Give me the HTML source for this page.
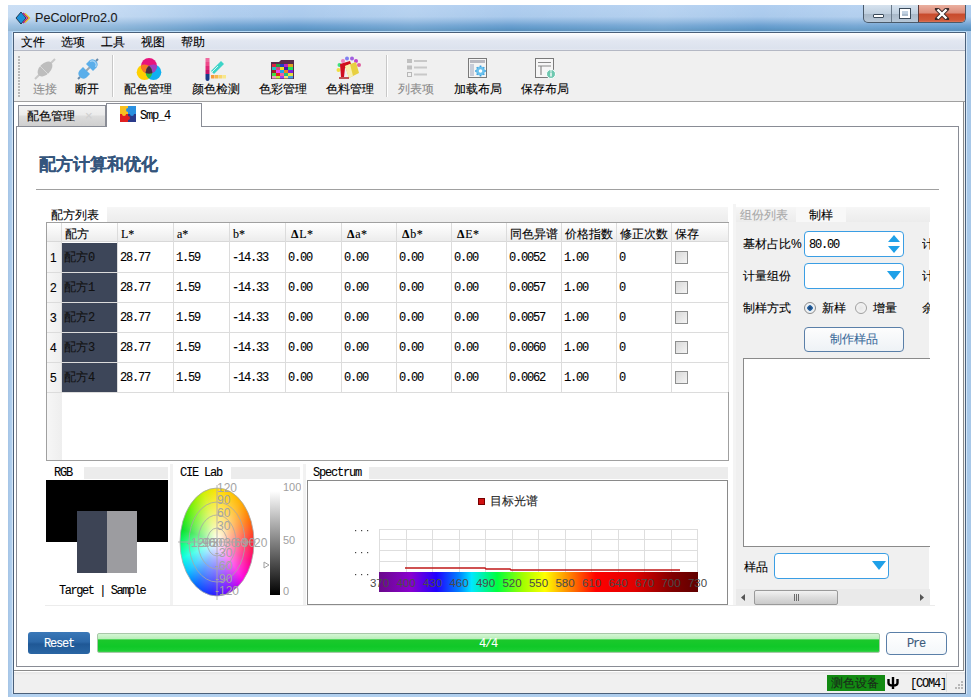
<!DOCTYPE html>
<html><head><meta charset="utf-8">
<style>
*{margin:0;padding:0;box-sizing:border-box}
html,body{width:974px;height:700px;overflow:hidden;background:#fff;font-family:"Liberation Sans",sans-serif;font-size:12px;color:#000}
.a{position:absolute}
.m{font-family:"Liberation Mono",monospace;letter-spacing:-1.2px}
.t{white-space:nowrap;line-height:1;-webkit-text-stroke:0.1px currentColor}
</style></head><body>
<!-- window frame -->
<div class="a" id="frame" style="left:8px;top:5px;width:963px;height:692px;background:linear-gradient(90deg,#a4c4e6 0,#b4d2f0 4px,#b0cfee 50%,#a8c8e8 100%)"></div>
<div class="a" style="left:8px;top:5px;width:963px;height:26px;background:linear-gradient(180deg,#b0cef0 0,#aacaec 45%,#90b8e0 60%,#6ea2d2 78%,#5e98c8 90%,#5a8cb8 100%)"></div><div class="a" style="left:13px;top:31px;width:953px;height:1px;background:#b8dcf8"></div>
<div class="a" style="left:8px;top:5px;width:963px;height:26px;background:linear-gradient(90deg,rgba(255,255,255,.35) 0,rgba(255,255,255,.3) 10%,rgba(255,255,255,.05) 22%,rgba(255,255,255,0) 30%,rgba(255,255,255,.12) 42%,rgba(255,255,255,0) 52%,rgba(255,255,255,.12) 68%,rgba(255,255,255,0) 78%,rgba(255,255,255,.1) 88%,rgba(255,255,255,0) 100%)"></div>
<div class="a" style="left:12px;top:32px;width:1px;height:662px;background:#d4e6f8"></div>
<div class="a" style="left:966px;top:32px;width:1px;height:662px;background:#d4e6f8"></div>
<!-- title -->
<div class="a" style="left:15px;top:12px;width:16px;height:12px">
<svg width="16" height="12" viewBox="0 0 16 12"><path d="M6 0 L11 6 L6 12 L1 6Z" fill="#1a8fd8" stroke="#123" stroke-width=".8"/><path d="M8 1 L13 6 L8 11" fill="none" stroke="#b0207a" stroke-width="1.6"/><path d="M10 1.5 L14.5 6 L10 10.5" fill="none" stroke="#e8c020" stroke-width="1.3"/></svg></div>
<div class="a t" style="left:35px;top:12px;font-size:12.6px;color:#1a1a1a">PeColorPro2.0</div>
<!-- caption buttons -->
<div class="a" style="left:863px;top:5px;width:103px;height:18px;border:1px solid #4a5a6a;border-top:none;border-radius:0 0 5px 5px;overflow:hidden;background:linear-gradient(#d6e2ee,#c0d0e0 50%,#a8b8c8 51%,#b8c8d8)">
 <div class="a" style="left:27px;top:0;width:1px;height:18px;background:#6a7a8a"></div>
 <div class="a" style="left:54px;top:0;width:48px;height:18px;border-left:1px solid #5a3a3a;background:linear-gradient(#eab0a0,#dc8a78 45%,#c84a2c 50%,#d05a3a 85%,#e08870)"></div>
 <div class="a" style="left:9px;top:9px;width:11px;height:4px;background:#fff;border:1px solid #3a4a5a;border-radius:1px"></div>
 <div class="a" style="left:36px;top:4px;width:10px;height:9px;background:transparent;border:2px solid #fff;outline:1px solid #3a4a5a"></div>
 <svg class="a" style="left:70px;top:3px" width="16" height="12" viewBox="0 0 16 12"><path d="M3 1 L13 11 M13 1 L3 11" stroke="#3a2a2a" stroke-width="4.2" stroke-linecap="round"/><path d="M3.5 1.5 L12.5 10.5 M12.5 1.5 L3.5 10.5" stroke="#fff" stroke-width="2.4"/></svg>
</div>
<!-- client -->
<div class="a" style="left:13px;top:32px;width:953px;height:662px;border:1px solid #4a607a;background:#f0f0f0"></div>
<!-- menubar -->
<div class="a" style="left:14px;top:33px;width:951px;height:18px;background:linear-gradient(#ffffff 0,#f2f4f9 20%,#e2e7f1 45%,#dce2ee 90%,#e4e8f0);border-bottom:1px solid #b4b8c4"></div>
<div class="a t" style="left:21px;top:36px">文件</div>
<div class="a t" style="left:61px;top:36px">选项</div>
<div class="a t" style="left:101px;top:36px">工具</div>
<div class="a t" style="left:141px;top:36px">视图</div>
<div class="a t" style="left:181px;top:36px">帮助</div>
<!-- toolbar -->
<div class="a" style="left:14px;top:51px;width:951px;height:51px;background:#f0f0f0;border-bottom:1px solid #a0a0a0"></div>

<!-- gripper -->
<div class="a" style="left:18px;top:56px;width:2px;height:42px;background:repeating-linear-gradient(#b8b8b8 0,#b8b8b8 2px,transparent 2px,transparent 3px)"></div>
<!-- connect (disabled) -->
<svg class="a" style="left:33px;top:57px" width="24" height="24" viewBox="0 0 24 24">
 <path d="M2 22 L7 17" stroke="#c8c8c8" stroke-width="2"/>
 <path d="M22 2 L17 7" stroke="#c8c8c8" stroke-width="2"/>
 <ellipse cx="12" cy="12" rx="5.5" ry="9" transform="rotate(45 12 12)" fill="#bdbdbd"/>
 <path d="M7 9 L15 17" stroke="#d8d8d8" stroke-width="1"/>
</svg>
<div class="a t" style="left:33px;top:83px;color:#8c8c8c">连接</div>
<!-- disconnect -->
<svg class="a" style="left:76px;top:57px" width="24" height="24" viewBox="0 0 24 24">
 <path d="M9 15 L15 9" stroke="#9aa8b4" stroke-width="2"/>
 <path d="M13.5 3.5 A5 5 0 0 1 20.5 10.5 L17 14 L10 7Z" fill="#5aaeea"/>
 <path d="M20 4 L22 2" stroke="#6a8aa8" stroke-width="2"/>
 <path d="M10.5 20.5 A5 5 0 0 1 3.5 13.5 L7 10 L14 17Z" fill="#5aaeea"/>
 <path d="M4 20 L2 22" stroke="#6a8aa8" stroke-width="2"/>
 <path d="M14 4.5 A4 4 0 0 1 19.5 10" stroke="#a8d4f4" stroke-width="1.2" fill="none"/>
</svg>
<div class="a t" style="left:75px;top:83px">断开</div>
<!-- separator -->
<div class="a" style="left:112px;top:55px;width:1px;height:42px;background:#c8c8c8;box-shadow:1px 0 0 #fff"></div>
<!-- color match -->
<svg class="a" style="left:134px;top:55px" width="30" height="28" viewBox="0 0 30 28">
 <defs><clipPath id="cm"><circle cx="15" cy="10.8" r="7.9"/></clipPath><clipPath id="cy"><circle cx="10.5" cy="17.3" r="7.8"/></clipPath><clipPath id="cc"><circle cx="19.5" cy="17.3" r="7.8"/></clipPath></defs>
 <circle cx="10.5" cy="17.3" r="7.8" fill="#ffd000"/>
 <circle cx="19.5" cy="17.3" r="7.8" fill="#10b0f0"/>
 <circle cx="15" cy="10.8" r="7.9" fill="#e8147c"/>
 <g clip-path="url(#cm)"><circle cx="10.5" cy="17.3" r="7.8" fill="#f57a20"/><circle cx="19.5" cy="17.3" r="7.8" fill="#a040c0"/></g>
 <g clip-path="url(#cy)"><circle cx="19.5" cy="17.3" r="7.8" fill="#30c040"/></g>
 <g clip-path="url(#cm)"><g clip-path="url(#cy)"><circle cx="19.5" cy="17.3" r="7.8" fill="#4a2a40"/></g></g>
</svg>
<div class="a t" style="left:124px;top:83px">配色管理</div>
<!-- color detect -->
<svg class="a" style="left:203px;top:57px" width="24" height="24" viewBox="0 0 24 24">
 <rect x="2.5" y="1" width="4" height="4" fill="#f06aa0"/>
 <rect x="2.5" y="5" width="4" height="4" fill="#ee4a8a"/>
 <rect x="2.5" y="9" width="4" height="4" fill="#e02878"/>
 <rect x="2.5" y="13" width="4" height="4" fill="#c8146a"/>
 <path d="M2.5 17 H6.5 V22 A2 2 0 0 1 2.5 22Z" fill="#1a3a8a"/>
 <path d="M8 14 L18 4 L21 7 L11 17Z" fill="#3cd4c8"/>
 <path d="M9 15 L12 12 M12 12 L15 9" stroke="#fff" stroke-width=".8"/>
 <rect x="8" y="18" width="3.5" height="3.5" fill="#f49a3a"/>
 <rect x="12" y="18" width="3.5" height="3.5" fill="#f6b84a"/>
 <rect x="16" y="18" width="3.5" height="3.5" fill="#f8d66a"/>
 <rect x="20" y="18" width="3" height="3.5" fill="#f8e88a"/>
</svg>
<div class="a t" style="left:192px;top:83px">颜色检测</div>
<!-- color management: folder mosaic -->
<svg class="a" style="left:270px;top:59px" width="26" height="21" viewBox="0 0 26 21">
 <path d="M1 3 H9 L11 1 H24 V20 H1Z" fill="#5a2a4a"/>
 <g>
 <rect x="2" y="5" width="4" height="3" fill="#e02040"/><rect x="6" y="5" width="4" height="3" fill="#20a040"/><rect x="10" y="5" width="4" height="3" fill="#2040c0"/><rect x="14" y="5" width="4" height="3" fill="#c020c0"/><rect x="18" y="5" width="5" height="3" fill="#e0a020"/>
 <rect x="2" y="8" width="4" height="3" fill="#20c0c0"/><rect x="6" y="8" width="4" height="3" fill="#e04080"/><rect x="10" y="8" width="4" height="3" fill="#f0e020"/><rect x="14" y="8" width="4" height="3" fill="#4020a0"/><rect x="18" y="8" width="5" height="3" fill="#20e060"/>
 <rect x="2" y="11" width="4" height="3" fill="#a02020"/><rect x="6" y="11" width="4" height="3" fill="#f040f0"/><rect x="10" y="11" width="4" height="3" fill="#20a0f0"/><rect x="14" y="11" width="4" height="3" fill="#f08020"/><rect x="18" y="11" width="5" height="3" fill="#8020e0"/>
 <rect x="2" y="14" width="4" height="3" fill="#40e040"/><rect x="6" y="14" width="4" height="3" fill="#e02020"/><rect x="10" y="14" width="4" height="3" fill="#f060a0"/><rect x="14" y="14" width="4" height="3" fill="#20c080"/><rect x="18" y="14" width="5" height="3" fill="#e0e040"/>
 <rect x="2" y="17" width="4" height="2.5" fill="#f0a0c0"/><rect x="6" y="17" width="4" height="2.5" fill="#c0f040"/><rect x="10" y="17" width="4" height="2.5" fill="#a040f0"/><rect x="14" y="17" width="4" height="2.5" fill="#f0e080"/><rect x="18" y="17" width="5" height="2.5" fill="#40a0e0"/>
 </g>
</svg>
<div class="a t" style="left:259px;top:83px">色彩管理</div>
<!-- colorant management -->
<svg class="a" style="left:336px;top:56px" width="26" height="25" viewBox="0 0 26 25">
 <circle cx="7" cy="5" r="2" fill="#f080c0"/><circle cx="11" cy="2.5" r="2" fill="#8080f0"/><circle cx="16" cy="2.5" r="2" fill="#a060e0"/><circle cx="20" cy="5" r="2" fill="#c040d0"/><circle cx="23" cy="9" r="2" fill="#e060a0"/>
 <circle cx="3.5" cy="9" r="2" fill="#40e080"/><circle cx="2.5" cy="14" r="2" fill="#f0e040"/>
 <path d="M4 8 L14 5 L15 8 L9 12 L8 21 L5 21Z" fill="#d01020"/>
 <path d="M9 10 L20 6 L23 17 L13 22Z" fill="#e8d040"/>
 <path d="M9 10 L14 8 L17 20 L13 22Z" fill="#f8f0b0"/>
 <path d="M3 22 H13" stroke="#b02020" stroke-width="1.5"/>
</svg>
<div class="a t" style="left:326px;top:83px">色料管理</div>
<!-- separator -->
<div class="a" style="left:386px;top:55px;width:1px;height:42px;background:#c8c8c8;box-shadow:1px 0 0 #fff"></div>
<!-- list items (disabled) -->
<svg class="a" style="left:405px;top:57px" width="24" height="22" viewBox="0 0 24 22">
 <rect x="2" y="2" width="5" height="4" fill="#c0c0c0"/><rect x="9" y="3" width="13" height="2" fill="#c8c8c8"/>
 <rect x="2" y="8.5" width="5" height="4" fill="#c0c0c0"/><rect x="9" y="9.5" width="13" height="2" fill="#c8c8c8"/>
 <rect x="2.5" y="15.5" width="4" height="4" fill="none" stroke="#b8b8b8"/><rect x="9" y="16.5" width="13" height="2" fill="#c8c8c8"/>
</svg>
<div class="a t" style="left:398px;top:83px;color:#8c8c8c">列表项</div>
<!-- load layout -->
<svg class="a" style="left:467px;top:57px" width="22" height="22" viewBox="0 0 22 22">
 <rect x="1.5" y="1.5" width="18" height="19" fill="#f4f4f4" stroke="#7a7a7a"/>
 <rect x="3" y="3" width="15" height="3" fill="#b8b8c0"/>
 <rect x="3" y="7" width="4" height="12" fill="#c8ccd8"/>
 <circle cx="13.5" cy="14" r="4.5" fill="#6ac0ec"/>
 <circle cx="13.5" cy="14" r="1.8" fill="#fff"/>
 <path d="M13.5 8.5 V10 M13.5 18 V19.5 M8 14 H9.5 M17.5 14 H19 M9.7 10.2 L10.7 11.2 M16.3 16.8 L17.3 17.8 M17.3 10.2 L16.3 11.2 M10.7 16.8 L9.7 17.8" stroke="#3aa0e0" stroke-width="1.6"/>
</svg>
<div class="a t" style="left:454px;top:83px">加载布局</div>
<!-- save layout -->
<svg class="a" style="left:534px;top:57px" width="23" height="23" viewBox="0 0 23 23">
 <rect x="1.5" y="1.5" width="18" height="19" fill="#f6f6f6" stroke="#7a7a7a"/>
 <path d="M4 5.5 H17 M4 9 H17 M7 9 V18" stroke="#8a8a8a" stroke-width="1.2"/>
 <circle cx="17" cy="17" r="4.5" fill="#6ec8b0" stroke="#fff" stroke-width="1"/>
 <path d="M17 15.5 V19.5" stroke="#fff" stroke-width="1.4"/><circle cx="17" cy="14" r=".8" fill="#fff"/>
</svg>
<div class="a t" style="left:521px;top:83px">保存布局</div>

<!-- tab widget -->
<div class="a" style="left:14px;top:102px;width:950px;height:569px;border:1px solid #8a8a8a;border-top:none;border-left:none;background:#fff"></div>
<div class="a" style="left:16px;top:126px;width:943px;height:541px;border:1px solid #898c95;background:#fff"></div>
<div class="a" style="left:18px;top:105px;width:88px;height:21px;border:1px solid #898c95;border-bottom:none;background:linear-gradient(#f2f2f2,#ebebeb 45%,#dddddd 50%,#cfcfcf)"></div>
<div class="a t" style="left:27px;top:110px">配色管理</div>
<div class="a t" style="left:85px;top:109px;color:#d0d0d0;font-size:13px">×</div>
<div class="a" style="left:106px;top:103px;width:96px;height:24px;border:1px solid #898c95;border-bottom:none;background:#fff"></div>

<svg class="a" style="left:120px;top:106px" width="16" height="16" viewBox="0 0 16 16">
 <rect x="0" y="0" width="8" height="8" fill="#f8c020"/><rect x="8" y="0" width="8" height="8" fill="#2a90e0"/>
 <rect x="0" y="8" width="8" height="8" fill="#e02020"/><rect x="8" y="8" width="8" height="8" fill="#2a3a8a"/>
 <circle cx="8" cy="4" r="2" fill="#2a90e0"/><circle cx="4" cy="8" r="2" fill="#f8c020"/><circle cx="12" cy="8" r="2" fill="#2a90e0"/><circle cx="8" cy="12" r="2" fill="#e02020"/>
</svg>
<div class="a t m" style="left:140px;top:110px">Smp_4</div>
<div class="a t" style="left:39px;top:156px;font-size:17px;font-weight:bold;color:#34557c;letter-spacing:0px">配方计算和优化</div>
<div class="a" style="left:36px;top:189px;width:903px;height:1px;background:#a0a0a0"></div>
<!-- group strip -->
<div class="a" style="left:46px;top:207px;width:682px;height:15px;background:linear-gradient(#f6f6f6,#ececec)"></div>
<div class="a" style="left:46px;top:207px;width:61px;height:15px;background:#fff"></div>
<div class="a t" style="left:51px;top:209px">配方列表</div>
<!-- table -->
<div class="a" style="left:46px;top:222px;width:683px;height:239px;border:1px solid #a0a0a0;background:#fff"></div>
<div class="a" style="left:47px;top:223px;width:681px;height:19px;background:linear-gradient(#ffffff,#f4f4f4 60%,#ececec);border-bottom:1px solid #d8d8d8"></div>
<div class="a" style="left:47px;top:242px;width:15px;height:218px;background:linear-gradient(90deg,#f6f6f6,#eeeeee)"></div>

<div class="a" style="left:117px;top:223px;width:1px;height:169px;background:#dcdcdc"></div>
<div class="a t" style="left:65px;top:228px">配方</div>
<div class="a" style="left:173px;top:223px;width:1px;height:169px;background:#dcdcdc"></div>
<div class="a t m" style="left:121px;top:228px;font-family:'Liberation Serif';letter-spacing:0;font-size:12px">L*</div>
<div class="a" style="left:229px;top:223px;width:1px;height:169px;background:#dcdcdc"></div>
<div class="a t m" style="left:177px;top:228px;font-family:'Liberation Serif';letter-spacing:0;font-size:12px">a*</div>
<div class="a" style="left:285px;top:223px;width:1px;height:169px;background:#dcdcdc"></div>
<div class="a t m" style="left:233px;top:228px;font-family:'Liberation Serif';letter-spacing:0;font-size:12px">b*</div>
<div class="a" style="left:341px;top:223px;width:1px;height:169px;background:#dcdcdc"></div>
<div class="a t m" style="left:291px;top:228px;font-family:'Liberation Serif';letter-spacing:0.6px;font-size:12px"><b>Δ</b>L*</div>
<div class="a" style="left:396px;top:223px;width:1px;height:169px;background:#dcdcdc"></div>
<div class="a t m" style="left:347px;top:228px;font-family:'Liberation Serif';letter-spacing:0.6px;font-size:12px"><b>Δ</b>a*</div>
<div class="a" style="left:451px;top:223px;width:1px;height:169px;background:#dcdcdc"></div>
<div class="a t m" style="left:402px;top:228px;font-family:'Liberation Serif';letter-spacing:0.6px;font-size:12px"><b>Δ</b>b*</div>
<div class="a" style="left:506px;top:223px;width:1px;height:169px;background:#dcdcdc"></div>
<div class="a t m" style="left:457px;top:228px;font-family:'Liberation Serif';letter-spacing:0.6px;font-size:12px"><b>Δ</b>E*</div>
<div class="a" style="left:561px;top:223px;width:1px;height:169px;background:#dcdcdc"></div>
<div class="a t" style="left:510px;top:228px">同色异谱</div>
<div class="a" style="left:616px;top:223px;width:1px;height:169px;background:#dcdcdc"></div>
<div class="a t" style="left:565px;top:228px">价格指数</div>
<div class="a" style="left:671px;top:223px;width:1px;height:169px;background:#dcdcdc"></div>
<div class="a t" style="left:620px;top:228px">修正次数</div>
<div class="a" style="left:728px;top:223px;width:1px;height:169px;background:#dcdcdc"></div>
<div class="a t" style="left:675px;top:228px">保存</div>
<div class="a" style="left:61px;top:223px;width:1px;height:169px;background:#dcdcdc"></div>
<div class="a" style="left:47px;top:272px;width:681px;height:1px;background:#dcdcdc"></div>
<div class="a t" style="left:50px;top:252px">1</div>
<div class="a" style="left:62px;top:243px;width:55px;height:29px;background:#3d4659"></div>
<div class="a t" style="left:64px;top:251px;color:#111">配方<span class="m" style="color:#111">0</span></div>
<div class="a t m" style="left:120px;top:252px">28.77</div>
<div class="a t m" style="left:176px;top:252px">1.59</div>
<div class="a t m" style="left:232px;top:252px">-14.33</div>
<div class="a t m" style="left:288px;top:252px">0.00</div>
<div class="a t m" style="left:344px;top:252px">0.00</div>
<div class="a t m" style="left:399px;top:252px">0.00</div>
<div class="a t m" style="left:454px;top:252px">0.00</div>
<div class="a t m" style="left:509px;top:252px">0.0052</div>
<div class="a t m" style="left:564px;top:252px">1.00</div>
<div class="a t m" style="left:619px;top:252px">0</div>
<div class="a" style="left:675px;top:251px;width:13px;height:13px;border:1px solid #8e8f8f;background:linear-gradient(135deg,#d8d8d8,#f4f4f4)"></div>
<div class="a" style="left:47px;top:302px;width:681px;height:1px;background:#dcdcdc"></div>
<div class="a t" style="left:50px;top:282px">2</div>
<div class="a" style="left:62px;top:273px;width:55px;height:29px;background:#3d4659"></div>
<div class="a t" style="left:64px;top:281px;color:#111">配方<span class="m" style="color:#111">1</span></div>
<div class="a t m" style="left:120px;top:282px">28.77</div>
<div class="a t m" style="left:176px;top:282px">1.59</div>
<div class="a t m" style="left:232px;top:282px">-14.33</div>
<div class="a t m" style="left:288px;top:282px">0.00</div>
<div class="a t m" style="left:344px;top:282px">0.00</div>
<div class="a t m" style="left:399px;top:282px">0.00</div>
<div class="a t m" style="left:454px;top:282px">0.00</div>
<div class="a t m" style="left:509px;top:282px">0.0057</div>
<div class="a t m" style="left:564px;top:282px">1.00</div>
<div class="a t m" style="left:619px;top:282px">0</div>
<div class="a" style="left:675px;top:281px;width:13px;height:13px;border:1px solid #8e8f8f;background:linear-gradient(135deg,#d8d8d8,#f4f4f4)"></div>
<div class="a" style="left:47px;top:332px;width:681px;height:1px;background:#dcdcdc"></div>
<div class="a t" style="left:50px;top:312px">3</div>
<div class="a" style="left:62px;top:303px;width:55px;height:29px;background:#3d4659"></div>
<div class="a t" style="left:64px;top:311px;color:#111">配方<span class="m" style="color:#111">2</span></div>
<div class="a t m" style="left:120px;top:312px">28.77</div>
<div class="a t m" style="left:176px;top:312px">1.59</div>
<div class="a t m" style="left:232px;top:312px">-14.33</div>
<div class="a t m" style="left:288px;top:312px">0.00</div>
<div class="a t m" style="left:344px;top:312px">0.00</div>
<div class="a t m" style="left:399px;top:312px">0.00</div>
<div class="a t m" style="left:454px;top:312px">0.00</div>
<div class="a t m" style="left:509px;top:312px">0.0057</div>
<div class="a t m" style="left:564px;top:312px">1.00</div>
<div class="a t m" style="left:619px;top:312px">0</div>
<div class="a" style="left:675px;top:311px;width:13px;height:13px;border:1px solid #8e8f8f;background:linear-gradient(135deg,#d8d8d8,#f4f4f4)"></div>
<div class="a" style="left:47px;top:362px;width:681px;height:1px;background:#dcdcdc"></div>
<div class="a t" style="left:50px;top:342px">4</div>
<div class="a" style="left:62px;top:333px;width:55px;height:29px;background:#3d4659"></div>
<div class="a t" style="left:64px;top:341px;color:#111">配方<span class="m" style="color:#111">3</span></div>
<div class="a t m" style="left:120px;top:342px">28.77</div>
<div class="a t m" style="left:176px;top:342px">1.59</div>
<div class="a t m" style="left:232px;top:342px">-14.33</div>
<div class="a t m" style="left:288px;top:342px">0.00</div>
<div class="a t m" style="left:344px;top:342px">0.00</div>
<div class="a t m" style="left:399px;top:342px">0.00</div>
<div class="a t m" style="left:454px;top:342px">0.00</div>
<div class="a t m" style="left:509px;top:342px">0.0060</div>
<div class="a t m" style="left:564px;top:342px">1.00</div>
<div class="a t m" style="left:619px;top:342px">0</div>
<div class="a" style="left:675px;top:341px;width:13px;height:13px;border:1px solid #8e8f8f;background:linear-gradient(135deg,#d8d8d8,#f4f4f4)"></div>
<div class="a" style="left:47px;top:392px;width:681px;height:1px;background:#dcdcdc"></div>
<div class="a t" style="left:50px;top:372px">5</div>
<div class="a" style="left:62px;top:363px;width:55px;height:29px;background:#3d4659"></div>
<div class="a t" style="left:64px;top:371px;color:#111">配方<span class="m" style="color:#111">4</span></div>
<div class="a t m" style="left:120px;top:372px">28.77</div>
<div class="a t m" style="left:176px;top:372px">1.59</div>
<div class="a t m" style="left:232px;top:372px">-14.33</div>
<div class="a t m" style="left:288px;top:372px">0.00</div>
<div class="a t m" style="left:344px;top:372px">0.00</div>
<div class="a t m" style="left:399px;top:372px">0.00</div>
<div class="a t m" style="left:454px;top:372px">0.00</div>
<div class="a t m" style="left:509px;top:372px">0.0062</div>
<div class="a t m" style="left:564px;top:372px">1.00</div>
<div class="a t m" style="left:619px;top:372px">0</div>
<div class="a" style="left:675px;top:371px;width:13px;height:13px;border:1px solid #8e8f8f;background:linear-gradient(135deg,#d8d8d8,#f4f4f4)"></div>

<!-- right panel -->
<div class="a" style="left:733px;top:204px;width:3px;height:402px;background:#f4f4f4"></div>
<div class="a" style="left:736px;top:207px;width:194px;height:15px;background:linear-gradient(#f6f6f6,#ececec)"></div>
<div class="a" style="left:796px;top:207px;width:50px;height:15px;background:#f8f8f8"></div>
<div class="a t" style="left:740px;top:209px;color:#a8a8a8">组份列表</div>
<div class="a t" style="left:809px;top:209px">制样</div>
<div class="a" style="left:736px;top:222px;width:193px;height:384px;background:#f0f0f0"></div>
<div class="a t" style="left:743px;top:238px">基材占比%</div>
<div class="a" style="left:804px;top:231px;width:100px;height:26px;border:1px solid #3a9ee4;border-radius:4px;background:#fff"></div>
<div class="a t m" style="left:809px;top:239px">80.00</div>
<svg class="a" style="left:886px;top:233px" width="16" height="22" viewBox="0 0 16 22"><path d="M2 9 L8 2 L14 9Z" fill="#1ea0e8"/><path d="M2 13 L14 13 L8 20Z" fill="#1ea0e8"/></svg>
<div class="a t" style="left:922px;top:238px;width:8px;overflow:hidden">计</div>
<div class="a t" style="left:743px;top:270px">计量组份</div>
<div class="a" style="left:804px;top:263px;width:100px;height:26px;border:1px solid #3a9ee4;border-radius:4px;background:#fff"></div>
<svg class="a" style="left:886px;top:270px" width="16" height="12" viewBox="0 0 16 12"><path d="M1 1 L15 1 L8 10Z" fill="#1ea0e8"/></svg>
<div class="a t" style="left:922px;top:270px;width:8px;overflow:hidden">计</div>
<div class="a t" style="left:743px;top:302px">制样方式</div>
<div class="a" style="left:804px;top:302px;width:12px;height:12px;border:1px solid #8a8a8a;border-radius:50%;background:radial-gradient(circle,#1a3a6a 0,#2a6aaa 2.5px,#e8eef4 3px,#fafafa 100%)"></div>
<div class="a t" style="left:822px;top:302px">新样</div>
<div class="a" style="left:855px;top:302px;width:12px;height:12px;border:1px solid #a0a0a0;border-radius:50%;background:radial-gradient(circle,#e6e6e6,#f8f8f8)"></div>
<div class="a t" style="left:873px;top:302px">增量</div>
<div class="a t" style="left:922px;top:302px;width:8px;overflow:hidden">余</div>
<div class="a" style="left:804px;top:327px;width:100px;height:25px;border:1px solid #5a7fa8;border-radius:4px;background:linear-gradient(#fdfdfd,#eef2f6)"></div>
<div class="a t" style="left:830px;top:333px;color:#3a6a9a">制作样品</div>
<div class="a" style="left:743px;top:358px;width:187px;height:189px;border:1px solid #8a8a8a;border-right:none;background:#fff"></div>
<div class="a t" style="left:744px;top:561px">样品</div>
<div class="a" style="left:774px;top:553px;width:115px;height:26px;border:1px solid #3a9ee4;border-radius:4px;background:#fff"></div>
<svg class="a" style="left:871px;top:560px" width="16" height="12" viewBox="0 0 16 12"><path d="M1 1 L15 1 L8 10Z" fill="#1ea0e8"/></svg>
<!-- h scrollbar -->
<div class="a" style="left:736px;top:589px;width:194px;height:17px;background:#eaeaea"></div>
<svg class="a" style="left:739px;top:593px" width="8" height="9"><path d="M6 1 L2 4.5 L6 8Z" fill="#555"/></svg>
<div class="a" style="left:754px;top:590px;width:84px;height:15px;border:1px solid #9a9a9a;border-radius:2px;background:linear-gradient(#f2f2f2,#dcdcdc 50%,#cacaca)"></div>
<div class="a" style="left:794px;top:594px;width:5px;height:7px;background:repeating-linear-gradient(90deg,#6a6a6a 0,#6a6a6a 1px,transparent 1px,transparent 2px)"></div>
<svg class="a" style="left:918px;top:593px" width="8" height="9"><path d="M2 1 L6 4.5 L2 8Z" fill="#555"/></svg>
<!-- RGB panel -->
<div class="a" style="left:46px;top:467px;width:122px;height:12px;background:#ececec"></div>
<div class="a" style="left:46px;top:467px;width:38px;height:12px;background:#fff"></div>
<div class="a t m" style="left:54px;top:467px;font-size:12px">RGB</div>
<div class="a" style="left:46px;top:480px;width:122px;height:62px;background:#000"></div>
<div class="a" style="left:77px;top:511px;width:30px;height:62px;background:#3d4455"></div>
<div class="a" style="left:107px;top:511px;width:30px;height:62px;background:#9c9ca0"></div>
<div class="a t m" style="left:59px;top:585px;letter-spacing:-1.45px">Target | Sample</div>
<div class="a" style="left:170px;top:464px;width:3px;height:142px;background:#f2f2f2"></div>
<!-- CIE panel -->
<div class="a" style="left:174px;top:467px;width:126px;height:12px;background:#ececec"></div>
<div class="a" style="left:174px;top:467px;width:57px;height:12px;background:#fff"></div>
<div class="a t m" style="left:180px;top:467px;font-size:12px">CIE Lab</div>
<div class="a" style="left:303px;top:464px;width:3px;height:142px;background:#f2f2f2"></div>
<div class="a" style="left:180px;top:488px;width:74px;height:108px;border-radius:50%;background:conic-gradient(from 0deg,#ffe000 0deg,#ffb000 30deg,#ff7000 55deg,#ff2030 90deg,#ff0080 120deg,#ff00e0 145deg,#8000ff 165deg,#2020ff 185deg,#0060ff 205deg,#00c0ff 225deg,#00ffe0 245deg,#00ff80 265deg,#00e020 290deg,#60f000 320deg,#d0f000 345deg,#ffe000 360deg)"></div>
<svg class="a" style="left:174px;top:480px" width="127" height="125" viewBox="0 0 127 125">
 <defs>
  
  <radialGradient id="wg" cx="50%" cy="50%" r="50%"><stop offset="0" stop-color="#fff" stop-opacity="1"/><stop offset=".35" stop-color="#fff" stop-opacity=".6"/><stop offset="1" stop-color="#fff" stop-opacity="0"/></radialGradient>
  <linearGradient id="gg" x1="0" y1="0" x2="0" y2="1"><stop offset="0" stop-color="#fff"/><stop offset="1" stop-color="#000"/></linearGradient>
 </defs>
 <ellipse cx="43" cy="62" rx="37" ry="54" fill="url(#wg)"/>
 <g fill="none" stroke="#a8a8a8" stroke-width="1" opacity=".8">
  <ellipse cx="43" cy="62" rx="37" ry="54"/>
  <ellipse cx="43" cy="62" rx="28" ry="40"/>
  <ellipse cx="43" cy="62" rx="19" ry="27"/>
  <ellipse cx="43" cy="62" rx="10" ry="14"/>
  <path d="M43 5 V120 M4 62 H82"/>
 </g>
 <g font-family="Liberation Sans" font-size="12" fill="#a4a4a4">
  <text x="43" y="12">120</text><text x="43" y="24">90</text><text x="43" y="37">60</text><text x="43" y="50">30</text>
  <text x="13" y="67">-120</text><text x="24" y="67">-90</text><text x="31" y="67">-60</text><text x="38" y="67">30</text><text x="50" y="67">30</text><text x="60" y="67">60</text><text x="68" y="67">90</text><text x="80" y="67">20</text>
  <text x="41" y="77">-30</text><text x="41" y="90">-60</text><text x="41" y="103">-90</text><text x="41" y="115">-120</text>
 </g>
 <rect x="96" y="11" width="10" height="104" fill="url(#gg)"/>
 <g font-family="Liberation Sans" font-size="11" fill="#a0a0a0"><text x="109" y="11">100</text><text x="109" y="64">50</text><text x="109" y="115">0</text></g>
 <path d="M90 82 L95 85 L90 88Z" fill="none" stroke="#a0a0a0"/>
</svg>
<!-- spectrum panel -->
<div class="a" style="left:307px;top:467px;width:421px;height:12px;background:#ececec"></div>
<div class="a" style="left:307px;top:467px;width:62px;height:12px;background:#fff"></div>
<div class="a t m" style="left:313px;top:467px;font-size:12px">Spectrum</div>
<div class="a" style="left:307px;top:480px;width:421px;height:125px;border:1px solid #8a8a8a;background:#fff"></div>
<div class="a" style="left:478px;top:498px;width:7px;height:7px;background:#d01010;border:1px solid #700"></div>
<div class="a t" style="left:490px;top:495px;font-size:12px;color:#222">目标光谱</div>
<svg class="a" style="left:350px;top:520px" width="370" height="80" viewBox="0 0 370 80">
 <defs><linearGradient id="sp" x1="0" x2="1">
  <stop offset="0" stop-color="#6a0a8a"/><stop offset=".1" stop-color="#8a00d0"/><stop offset=".18" stop-color="#2000ff"/><stop offset=".25" stop-color="#0080ff"/><stop offset=".29" stop-color="#00e8ff"/><stop offset=".37" stop-color="#00ff40"/><stop offset=".45" stop-color="#a0ff00"/><stop offset=".52" stop-color="#ffff00"/><stop offset=".6" stop-color="#ff8000"/><stop offset=".68" stop-color="#ff0000"/><stop offset=".8" stop-color="#e00000"/><stop offset=".92" stop-color="#800000"/><stop offset="1" stop-color="#600000"/>
 </linearGradient></defs>
 <g stroke="#dedede" stroke-width="1" shape-rendering="crispEdges">
  <path d="M29 9 H348 M29 19.5 H348 M29 30 H348 M29 41 H348"/>
  <path d="M29.5 9 V52 M56 9 V52 M82.5 9 V52 M109 9 V52 M135.5 9 V52 M162 9 V52 M188.5 9 V52 M215 9 V52 M241.5 9 V52 M268 9 V52 M294.5 9 V52 M321 9 V52 M347.5 9 V52"/>
 </g>
 <rect x="29" y="52" width="319" height="20" fill="url(#sp)"/>
 <path d="M55 48 H135 L136 49 H160 L161 50 H330" stroke="#c01818" stroke-width="1.6" fill="none"/>
 <g font-family="Liberation Sans" font-size="11.5" fill="#4a4a4a" text-anchor="middle">
  <text x="29.5" y="67">370</text><text x="56" y="67">400</text><text x="82.5" y="67">430</text><text x="109" y="67">460</text><text x="135.5" y="67">490</text><text x="162" y="67">520</text><text x="188.5" y="67">550</text><text x="215" y="67">580</text><text x="241.5" y="67">610</text><text x="268" y="67">640</text><text x="294.5" y="67">670</text><text x="321" y="67">700</text><text x="347.5" y="67">730</text>
 </g>
 <g fill="#444"><rect x="5" y="10" width="1.2" height="1.2"/><rect x="11" y="10" width="1.2" height="1.2"/><rect x="17" y="10" width="1.2" height="1.2"/><rect x="5" y="32" width="1.2" height="1.2"/><rect x="11" y="32" width="1.2" height="1.2"/><rect x="17" y="32" width="1.2" height="1.2"/><rect x="5" y="54" width="1.2" height="1.2"/><rect x="11" y="54" width="1.2" height="1.2"/><rect x="17" y="54" width="1.2" height="1.2"/></g>
</svg>
<div class="a" style="left:45px;top:605px;width:890px;height:1px;background:#ececec"></div>
<!-- bottom buttons -->
<div class="a" style="left:28px;top:632px;width:62px;height:22px;border-radius:3px;background:linear-gradient(#3a78b8,#2c68a8 45%,#1f5896 55%,#2a66a4)"></div>
<div class="a t m" style="left:44px;top:638px;color:#fff">Reset</div>
<div class="a" style="left:97px;top:633px;width:783px;height:20px;border:1px solid #a8c8a8;border-radius:2px;background:linear-gradient(#d4f6d4 0,#b8eeb8 28%,#1cc82c 32%,#10c828 70%,#18cc30 90%,#40d050)"></div>
<div class="a t m" style="left:479px;top:638px;color:#fff">4/4</div>
<div class="a" style="left:886px;top:632px;width:61px;height:23px;border:1px solid #5a7fa8;border-radius:4px;background:linear-gradient(#ffffff,#f4f7fa)"></div>
<div class="a t m" style="left:907px;top:638px;color:#3a5a7a">Pre</div>

<div id="content"></div>
<!-- status bar -->
<div class="a" style="left:14px;top:671px;width:951px;height:22px;background:linear-gradient(#ffffff 0,#ffffff 1px,#e8e8e8 1px,#ececec 3px,#f0f0f0 4px)"></div>

<div class="a" style="left:827px;top:675px;width:58px;height:16px;background:#128a12"></div>
<div class="a t" style="left:831px;top:677px;color:#1a2a1a">测色设备</div>
<svg class="a" style="left:887px;top:676px" width="12" height="14" viewBox="0 0 12 14"><path d="M6 1 V13 M1.5 3 V7 A4.5 2.5 0 0 0 10.5 7 V3" stroke="#000" stroke-width="2.4" fill="none"/></svg>
<div class="a t m" style="left:910px;top:678px">[COM4]</div>
<div class="a" style="left:946px;top:673px;width:1px;height:19px;background:#dcdcdc"></div>
<svg class="a" style="left:953px;top:681px" width="11" height="11"><g fill="#b8b8b8"><rect x="8" y="0" width="2" height="2"/><rect x="5" y="3" width="2" height="2"/><rect x="8" y="3" width="2" height="2"/><rect x="2" y="6" width="2" height="2"/><rect x="5" y="6" width="2" height="2"/><rect x="8" y="6" width="2" height="2"/></g></svg>
</body></html>
